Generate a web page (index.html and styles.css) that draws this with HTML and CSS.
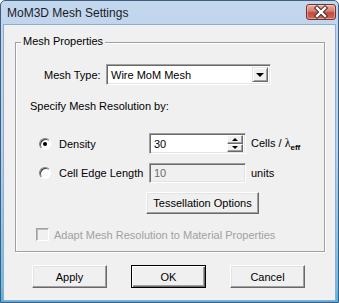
FILE: index.html
```html
<!DOCTYPE html>
<html lang="en">
<head>
    <meta charset="UTF-8">
    <title>MoM3D Mesh Settings</title>
    <link rel="stylesheet" href="styles.css">
</head>
<body>
    <div class="window">
        <div class="titlebar">
            <span class="title">MoM3D Mesh Settings</span>
            <div class="close">
                <svg width="30" height="16" viewBox="0 0 30 16">
                    <path d="M11 4 L19 12 M19 4 L11 12" stroke="#3b2b2b" stroke-width="4.4" stroke-linecap="square"/>
                    <path d="M11 4 L19 12 M19 4 L11 12" stroke="#fff" stroke-width="2.4" stroke-linecap="square"/>
                </svg>
            </div>
        </div>

        <div class="client">
            <div class="group">
                <span class="group-title">Mesh Properties</span>

                <div class="row type-row">
                    <span class="type-label">Mesh Type:</span>
                    <div class="combo">
                        <span class="combo-text">Wire MoM Mesh</span>
                        <span class="combo-btn"><span class="arrow-down"></span></span>
                    </div>
                </div>

                <div class="specify">Specify Mesh Resolution by:</div>

                <div class="row radio-row density-row">
                    <span class="radio checked"></span>
                    <span class="radio-label">Density</span>
                    <div class="field">
                        <span>30</span>
                        <span class="spin">
                            <span class="spin-btn"><span class="tri-up"></span></span>
                            <span class="spin-btn"><span class="tri-down"></span></span>
                        </span>
                    </div>
                    <span class="unit">Cells / <span class="lambda">&lambda;</span><sub>eff</sub></span>
                </div>

                <div class="row radio-row edge-row">
                    <span class="radio"></span>
                    <span class="radio-label">Cell Edge Length</span>
                    <div class="field disabled"><span>10</span></div>
                    <span class="unit">units</span>
                </div>

                <div class="row tess-row">
                    <button class="button tess">Tessellation Options</button>
                </div>

                <div class="row check-row">
                    <span class="checkbox"></span>
                    <span class="check-label">Adapt Mesh Resolution to Material Properties</span>
                </div>
            </div>

            <div class="actions">
                <button class="button">Apply</button>
                <button class="button default">OK</button>
                <button class="button">Cancel</button>
            </div>
        </div>
    </div>
</body>
</html>
```

FILE: styles.css
```css
* {
    box-sizing: border-box;
}
body {
    margin: 0;
    font-family: "Liberation Sans", Arial, sans-serif;
    font-size: 11px;
    color: #000;
    background: #fff;
}
.window {
    width: 339px;
    height: 303px;
    border: 1px solid #3f5f80;
    border-radius: 5px 5px 0 0;
    background: linear-gradient(#c3d7ed, #b4d0ec 50%, #6dbde8 95%, #4fb2e6);
    display: flex;
    flex-direction: column;
}
.titlebar {
    height: 24px;
    flex: none;
    display: flex;
    justify-content: space-between;
    padding: 0 2px 0 6px;
}
.title {
    font-size: 12px;
    line-height: 24px;
    color: #1a1a2a;
}
.close {
    width: 30px;
    height: 16px;
    margin-top: 3px;
    border: 1px solid #7a2f28;
    border-radius: 3px;
    background: linear-gradient(#eab0a4, #d77a6a 45%, #c44a3c 55%, #d26a58);
    box-shadow: inset 0 0 0 1px rgba(255, 255, 255, 0.35);
}
.close svg {
    display: block;
    margin: -1px 0 0 -1px;
}
.client {
    flex: 1;
    margin: 0 3px 2px;
    background: #f0f0f0;
    box-shadow: 0 0 0 1px #8eaccc;
    padding-top: 17px;
}
.group {
    position: relative;
    margin: 0 10px 0 11px;
    border: 1px solid #a0a0a0;
    box-shadow: inset 1px 1px 0 #fff, 1px 1px 0 #fff;
    padding: 21px 0 10px;
}
.group-title {
    position: absolute;
    left: 5px;
    top: -8px;
    padding: 0 2px;
    background: #f0f0f0;
    line-height: 13px;
}
.row {
    display: flex;
    align-items: center;
}
.type-row {
    padding-left: 28px;
    height: 21px;
}
.type-label {
    width: 62px;
}
.combo {
    width: 165px;
    height: 21px;
    display: flex;
    align-items: center;
    justify-content: space-between;
    background: #fff;
    border: 1px solid;
    border-color: #a0a0a0 #fff #fff #a0a0a0;
    box-shadow: inset 1px 1px 0 #696969, inset -1px -1px 0 #e3e3e3;
    padding: 2px 2px 2px 4px;
}
.combo-btn {
    width: 16px;
    height: 15px;
    display: flex;
    align-items: center;
    justify-content: center;
    background: #f0f0f0;
    border: 1px solid;
    border-color: #e3e3e3 #696969 #696969 #e3e3e3;
    box-shadow: inset 1px 1px 0 #fff, inset -1px -1px 0 #a0a0a0;
}
.arrow-down {
    width: 0;
    height: 0;
    border-left: 4px solid transparent;
    border-right: 4px solid transparent;
    border-top: 4px solid #000;
}
.specify {
    padding-left: 14px;
    margin-top: 15px;
    line-height: 13px;
}
.radio-row {
    padding-left: 23px;
    height: 21px;
}
.density-row {
    margin-top: 20px;
}
.edge-row {
    margin-top: 8px;
}
.radio {
    width: 12px;
    height: 12px;
    border-radius: 50%;
    border: 1px solid;
    border-color: #808080 #fff #fff #808080;
    background: #fff;
    box-shadow: inset 1px 1px 0 #404040;
    position: relative;
}
.radio.checked::after {
    content: "";
    position: absolute;
    left: 3px;
    top: 3px;
    width: 4px;
    height: 4px;
    border-radius: 50%;
    background: #000;
}
.radio-label {
    width: 90px;
    margin-left: 8px;
}
.field {
    width: 97px;
    height: 21px;
    display: flex;
    align-items: center;
    justify-content: space-between;
    background: #fff;
    border: 1px solid;
    border-color: #a0a0a0 #fff #fff #a0a0a0;
    box-shadow: inset 1px 1px 0 #696969, inset -1px -1px 0 #e3e3e3;
    padding: 2px 2px 2px 4px;
}
.field.disabled {
    height: 20px;
    background: #f0f0f0;
    color: #6d6d6d;
}
.spin {
    width: 16px;
    height: 17px;
    display: flex;
    flex-direction: column;
}
.spin-btn {
    flex: 1;
    display: flex;
    align-items: center;
    justify-content: center;
    background: #f0f0f0;
    border: 1px solid;
    border-color: #fff #696969 #696969 #fff;
    box-shadow: inset -1px -1px 0 #a0a0a0;
}
.tri-up {
    border-left: 3px solid transparent;
    border-right: 3px solid transparent;
    border-bottom: 3px solid #000;
}
.tri-down {
    border-left: 3px solid transparent;
    border-right: 3px solid transparent;
    border-top: 3px solid #000;
}
.unit {
    margin-left: 5px;
}
.lambda {
    font-size: 12px;
    font-family: "Liberation Serif", serif;
}
sub {
    font-size: 8px;
    font-weight: bold;
    vertical-align: -3px;
}
.tess-row {
    padding-left: 130px;
    margin-top: 9px;
}
.button {
    font-family: inherit;
    font-size: 11px;
    color: #000;
    width: 75px;
    height: 23px;
    padding: 0;
    background: #f0f0f0;
    border: 1px solid;
    border-color: #fff #696969 #696969 #fff;
    box-shadow: inset -1px -1px 0 #a0a0a0, inset 1px 1px 0 #e3e3e3;
}
.button.tess {
    width: 113px;
    height: 22px;
}
.button.default {
    border: 1px solid #000;
    box-shadow: inset 1px 1px 0 #fff, inset -1px -1px 0 #696969, inset -2px -2px 0 #a0a0a0;
}
.check-row {
    padding-left: 20px;
    margin-top: 14px;
    height: 13px;
    color: #a0a0a0;
}
.checkbox {
    width: 13px;
    height: 13px;
    margin-right: 5px;
    background: #f0f0f0;
    border: 1px solid;
    border-color: #a0a0a0 #fff #fff #a0a0a0;
    box-shadow: inset 1px 1px 0 #bdbdbd;
}
.actions {
    display: flex;
    gap: 24px;
    padding-left: 28px;
    margin-top: 13px;
}
```
